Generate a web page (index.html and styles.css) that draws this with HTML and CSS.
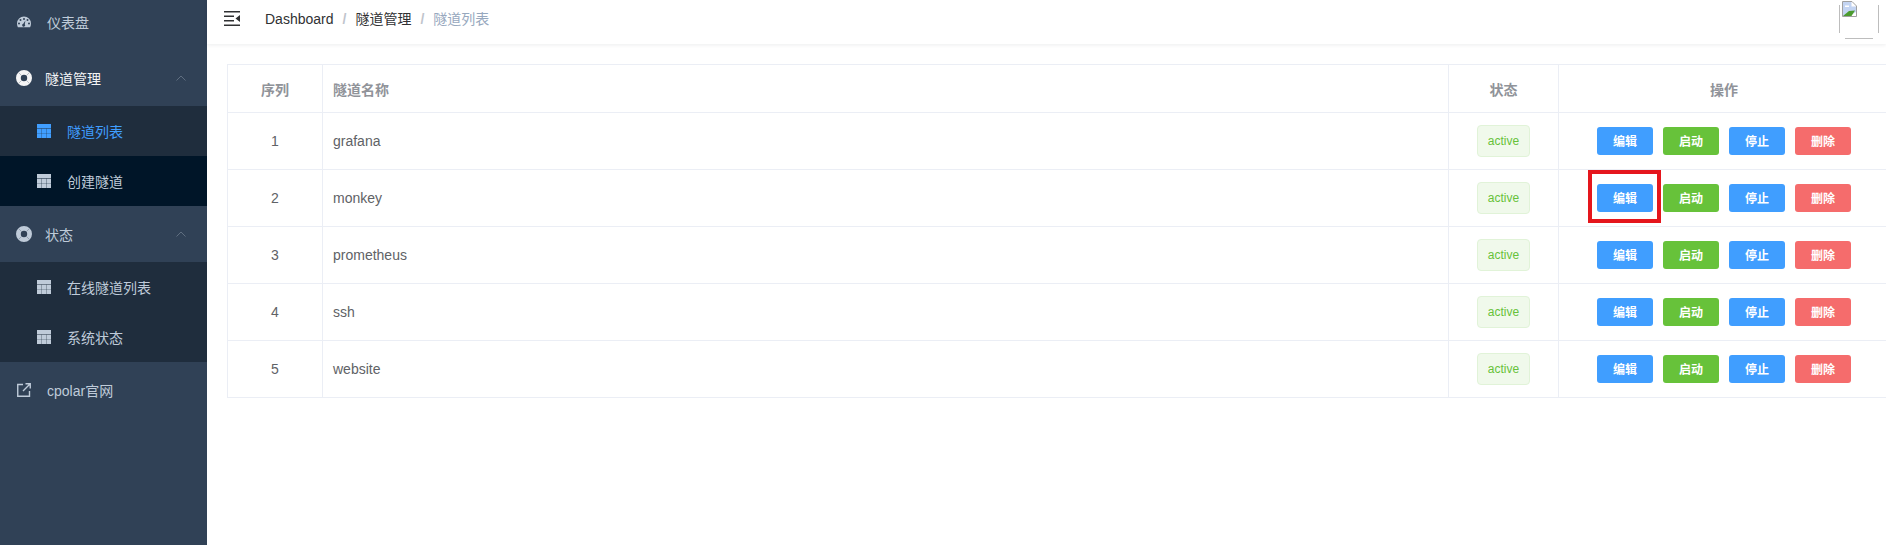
FILE: index.html
```html
<!DOCTYPE html>
<html lang="zh-CN">
<head>
    <meta charset="UTF-8">
    <title>隧道列表</title>
    <link rel="stylesheet" href="styles.css">
</head>
<body>
    <svg class="defs">
        <symbol id="i-table" viewBox="0 0 14 14">
            <path d="M0 0h14v4.350H0zM0 4.650h4.350v4.350H0zM4.650 4.650h4.700v4.350h-4.700zM9.650 4.650H14v4.350H9.650zM0 9.300h4.350V14H0zM4.650 9.300h4.700V14h-4.700zM9.650 9.300H14V14H9.650z"/>
        </symbol>
        <symbol id="i-buoy" viewBox="0 0 16 16">
            <path fill-rule="evenodd" d="M8 0a8 8 0 1 1 0 16A8 8 0 0 1 8 0zm0 4.800a3.200 3.200 0 1 0 0 6.400 3.200 3.200 0 0 0 0-6.400z"/>
            <path class="buoy-cut" d="M2.400 2.400l3 3M13.600 2.400l-3 3M2.400 13.600l3-3M13.600 13.600l-3-3"/>
        </symbol>
        <symbol id="i-up" viewBox="0 0 10 6">
            <path d="M.5 5.500L5 1l4.500 4.500" fill="none" stroke="currentColor"/>
        </symbol>
    </svg>

    <!-- Left menu -->
    <div class="sidebar">
        <a class="menu-item first" href="#">
            <svg class="icon" viewBox="0 0 14 12"><path fill-rule="evenodd" d="M7 .5a7 7 0 0 1 7 7c0 1.500-.3 2.700-.9 3.800H.9C.3 10.200 0 9 0 7.500a7 7 0 0 1 7-7zM3.500 3a1 1 0 1 0 0 2 1 1 0 0 0 0-2zM7 2a1 1 0 1 0 0 2 1 1 0 0 0 0-2zm3.500 1a1 1 0 1 0 0 2 1 1 0 0 0 0-2zM2 6.500a1 1 0 1 0 0 2 1 1 0 0 0 0-2zm10 0a1 1 0 1 0 0 2 1 1 0 0 0 0-2zM8.400 4.500L6.300 7.700a1.500 1.500 0 1 0 1.500.5z"/></svg>
            <span>仪表盘</span>
        </a>

        <div class="menu-title open">
            <svg class="icon buoy"><use href="#i-buoy"/></svg>
            <span>隧道管理</span>
            <svg class="arrow"><use href="#i-up"/></svg>
        </div>
        <div class="submenu">
            <a class="sub-item active" href="#"><svg class="icon"><use href="#i-table"/></svg><span>隧道列表</span></a>
            <a class="sub-item hover" href="#"><svg class="icon"><use href="#i-table"/></svg><span>创建隧道</span></a>
        </div>

        <div class="menu-title">
            <svg class="icon buoy"><use href="#i-buoy"/></svg>
            <span>状态</span>
            <svg class="arrow"><use href="#i-up"/></svg>
        </div>
        <div class="submenu">
            <a class="sub-item" href="#"><svg class="icon"><use href="#i-table"/></svg><span>在线隧道列表</span></a>
            <a class="sub-item" href="#"><svg class="icon"><use href="#i-table"/></svg><span>系统状态</span></a>
        </div>

        <a class="menu-item" href="#">
            <svg class="icon link" viewBox="0 0 14 14"><path d="M6 1.500H.75v11.750H12.500V8M8.500.75h4.750V5.500M13 1L6 8" fill="none" stroke="currentColor" stroke-width="1.400"/></svg>
            <span>cpolar官网</span>
        </a>
    </div>

    <div class="main">
        <div class="navbar">
            <svg class="hamburger" viewBox="0 0 16 15"><path d="M0 0h16v1.500H0zM0 4.500h10V6H0zM0 9h10v1.500H0zM0 13.500h16V15H0zM16 4v7l-4.500-3.500z"/></svg>
            <div class="breadcrumb">
                <span class="crumb">Dashboard</span>
                <span class="sep">/</span>
                <span class="crumb">隧道管理</span>
                <span class="sep">/</span>
                <span class="crumb last">隧道列表</span>
            </div>
            <!-- avatar that failed to load -->
            <svg class="avatar" viewBox="0 0 40 40">
                <path d="M.5 5v28M39.500 5v28M6 38.500h28" fill="none" stroke="#bdbdbd"/>
                <path d="M3.500 1.500h9.500l4.500 4.500v10.500H3.500z" fill="#fff" stroke="#a0a0a0"/>
                <path d="M4 2h8.500v4.500H17v5.500L10 16H4z" fill="#c3d4f2"/>
                <path d="M6 5.500h4v1.500H6z" fill="#fff"/>
                <path d="M4 16l6-5 6-.5-3.500 5.500z" fill="#4c9b2e"/>
            </svg>
        </div>

        <div class="content">
            <table class="tunnels">
                <thead>
                    <tr>
                        <th class="col-no">序列</th>
                        <th class="col-name">隧道名称</th>
                        <th class="col-status">状态</th>
                        <th class="col-ops">操作</th>
                    </tr>
                </thead>
                <tbody>
                    <tr>
                        <td class="center">1</td>
                        <td>grafana</td>
                        <td class="center"><span class="tag">active</span></td>
                        <td class="center">
                            <button class="btn blue">编辑</button><button class="btn green">启动</button><button class="btn blue">停止</button><button class="btn red">删除</button>
                        </td>
                    </tr>
                    <tr>
                        <td class="center">2</td>
                        <td>monkey</td>
                        <td class="center"><span class="tag">active</span></td>
                        <td class="center">
                            <button class="btn blue marked">编辑</button><button class="btn green">启动</button><button class="btn blue">停止</button><button class="btn red">删除</button>
                        </td>
                    </tr>
                    <tr>
                        <td class="center">3</td>
                        <td>prometheus</td>
                        <td class="center"><span class="tag">active</span></td>
                        <td class="center">
                            <button class="btn blue">编辑</button><button class="btn green">启动</button><button class="btn blue">停止</button><button class="btn red">删除</button>
                        </td>
                    </tr>
                    <tr>
                        <td class="center">4</td>
                        <td>ssh</td>
                        <td class="center"><span class="tag">active</span></td>
                        <td class="center">
                            <button class="btn blue">编辑</button><button class="btn green">启动</button><button class="btn blue">停止</button><button class="btn red">删除</button>
                        </td>
                    </tr>
                    <tr>
                        <td class="center">5</td>
                        <td>website</td>
                        <td class="center"><span class="tag">active</span></td>
                        <td class="center">
                            <button class="btn blue">编辑</button><button class="btn green">启动</button><button class="btn blue">停止</button><button class="btn red">删除</button>
                        </td>
                    </tr>
                </tbody>
            </table>
        </div>
    </div>
</body>
</html>
```

FILE: styles.css
```css
html, body {
    height: 100%;
}

body {
    font-family: "Liberation Sans", "Noto Sans CJK SC", sans-serif;
    font-size: 14px;
    background: #fff;
    margin: 0;
    display: flex;
    overflow: hidden;
}

a {
    text-decoration: none;
    color: inherit;
}

.defs {
    display: none;
}

/* Left menu */
.sidebar {
    width: 207px;
    flex-shrink: 0;
    background: #304156;
    color: #bfcbd9;
    overflow: hidden;
}

.menu-item,
.menu-title {
    display: flex;
    align-items: center;
    height: 56px;
    padding-left: 17px;
}

.menu-item.first {
    margin-top: -6px;
}

.menu-item .icon {
    width: 14px;
    height: 14px;
    margin-right: 16px;
    fill: currentColor;
}

.menu-title {
    position: relative;
    padding-left: 16px;
}

.menu-title.open {
    color: #f4f4f5;
}

.menu-title .buoy {
    width: 16px;
    height: 16px;
    margin-right: 13px;
    fill: currentColor;
}

.buoy-cut {
    stroke: #304156;
    stroke-opacity: .3;
    fill: none;
}

.arrow {
    position: absolute;
    right: 21px;
    top: 25px;
    width: 10px;
    height: 6px;
    color: #5f6e80;
}

.submenu {
    background: #1f2d3d;
}

.sub-item {
    display: flex;
    align-items: center;
    height: 50px;
    padding-left: 37px;
}

.sub-item .icon {
    width: 14px;
    height: 14px;
    margin-right: 16px;
    fill: currentColor;
}

.sub-item.active {
    color: #409eff;
}

.sub-item.hover {
    background: #001528;
}

/* Top bar */
.main {
    flex: 1;
    min-width: 0;
}

.navbar {
    display: flex;
    align-items: flex-start;
    height: 44px;
    background: #fff;
    box-shadow: 0 1px 4px rgba(0, 21, 41, .08);
    position: relative;
}

.hamburger {
    width: 16px;
    height: 15px;
    margin: 11px 25px 0 17px;
    fill: #303133;
}

.breadcrumb {
    display: flex;
    line-height: 16px;
    margin-top: 11px;
    color: #303133;
}

.sep {
    margin: 0 9px;
    color: #c0c4cc;
    font-weight: bold;
}

.crumb.last {
    color: #97a8be;
}

.avatar {
    width: 40px;
    height: 40px;
    margin-left: auto;
    margin-right: 7px;
}

/* Table */
.content {
    padding: 20px;
}

.tunnels {
    width: 1663px;
    table-layout: fixed;
    border-collapse: separate;
    border-spacing: 0;
    border-top: 1px solid #ebeef5;
    border-left: 1px solid #ebeef5;
    color: #606266;
}

.tunnels th,
.tunnels td {
    border-right: 1px solid #ebeef5;
    border-bottom: 1px solid #ebeef5;
    padding: 0 10px;
}

.tunnels th {
    height: 47px;
    color: #909399;
    font-weight: bold;
    text-align: center;
}

.tunnels td {
    height: 56px;
}

.tunnels .col-name {
    text-align: left;
}

.col-no {
    width: 74px;
}

.col-status {
    width: 89px;
}

.col-ops {
    width: 310px;
}

.tunnels td.center {
    text-align: center;
}

.tag {
    display: inline-block;
    box-sizing: border-box;
    height: 32px;
    line-height: 30px;
    padding: 0 10px;
    font-size: 12px;
    color: #67c23a;
    background: #f0f9eb;
    border: 1px solid #e1f3d8;
    border-radius: 4px;
    vertical-align: middle;
}

.btn {
    width: 56px;
    height: 28px;
    padding: 0 0 1px;
    border: none;
    border-radius: 3px;
    color: #fff;
    font: bold 12px "Liberation Sans", "Noto Sans CJK SC", sans-serif;
    margin-left: 10px;
    vertical-align: middle;
    cursor: pointer;
}

.btn:first-child {
    margin-left: 0;
}

.btn.blue {
    background: #409eff;
}

.btn.green {
    background: #67c23a;
}

.btn.red {
    background: #f56c6c;
}

/* Red frame drawn over the screenshot */
.marked {
    position: relative;
}

.marked::after {
    content: "";
    position: absolute;
    left: -9px;
    right: -8px;
    top: -14px;
    bottom: -11px;
    border: 4px solid #e5161d;
}
```
